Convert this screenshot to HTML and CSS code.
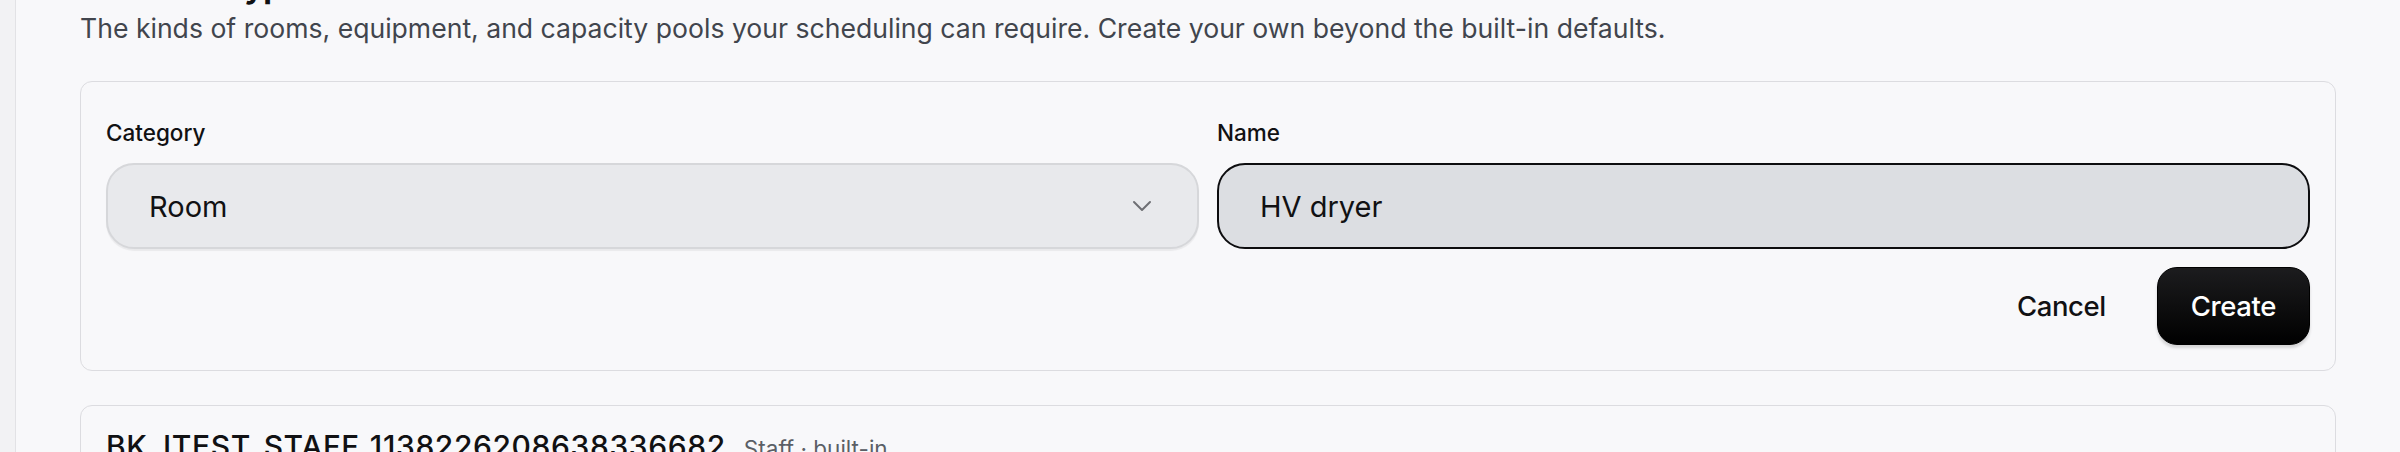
FILE: index.html
```html
<!DOCTYPE html>
<html lang="en">
<head>
    <meta charset="UTF-8">
    <meta name="viewport" content="width=device-width, initial-scale=1.0">
    <title>Resource types</title>
    <link rel="stylesheet" href="styles.css">
</head>
<body>
    <div class="layout">
        <aside class="sidebar"></aside>
        <main class="main">
            <section class="section">
                <h2 class="section-title">Resource types</h2>
                <p class="section-desc">The kinds of rooms, equipment, and capacity pools your scheduling can require. Create your own beyond the built-in defaults.</p>

                <form class="type-form">
                    <div class="form-grid">
                        <label class="field">
                            <span class="field-label">Category</span>
                            <div class="select-wrap">
                                <select class="control control-select">
                                    <option>Room</option>
                                    <option>Equipment</option>
                                    <option>Staff</option>
                                </select>
                                <svg class="chevron" width="20" height="12" viewBox="0 0 20 12">
                                    <polyline points="2,2 10,10 18,2" fill="none" stroke="#6e6f74" stroke-width="2" stroke-linecap="round" stroke-linejoin="round"/>
                                </svg>
                            </div>
                        </label>
                        <label class="field">
                            <span class="field-label">Name</span>
                            <input class="control control-input" type="text" value="HV dryer">
                        </label>
                    </div>
                    <div class="form-actions">
                        <button type="button" class="btn btn-ghost">Cancel</button>
                        <button type="submit" class="btn btn-primary">Create</button>
                    </div>
                </form>

                <ul class="type-list">
                    <li class="type-card">
                        <span class="type-name">BK_ITEST_STAFF_1138226208638336682</span>
                        <span class="type-meta">Staff · built-in</span>
                    </li>
                </ul>
            </section>
        </main>
    </div>
</body>
</html>
```

FILE: styles.css
```css
:root {
    --page-bg: #f8f8fa;
    --sidebar-bg: #f2f2f4;
    --line: #dcdce0;
    --text: #111113;
    --muted: #41454d;
    --field-bg: #e8e9ec;
    --field-active: #dcdee2;
}

* {
    box-sizing: border-box;
}

body {
    margin: 0;
    font-family: 'Inter', 'Liberation Sans', sans-serif;
    background-color: var(--page-bg);
    color: var(--text);
    overflow: hidden;
}

.layout {
    display: flex;
    min-height: 100vh;
}

.sidebar {
    width: 16px;
    flex-shrink: 0;
    background-color: var(--sidebar-bg);
    border-right: 1px solid #e2e2e5;
}

.main {
    flex: 1;
    padding: 0 64px;
}

/* heading sits mostly above the fold; only its descenders show */
.section-title {
    font-size: 32px;
    font-weight: 700;
    line-height: 44px;
    letter-spacing: -0.3px;
    margin: -35px 0 -1px;
}

.section-desc {
    font-size: 26.6px;
    line-height: 40px;
    color: var(--muted);
    margin: 0 0 33px;
}

.type-form {
    border: 1px solid var(--line);
    border-radius: 12px;
    padding: 36px 25px 25px;
}

.form-grid {
    display: grid;
    grid-template-columns: 1fr 1fr;
    gap: 18px;
}

.field {
    display: flex;
    flex-direction: column;
}

.field-label {
    font-size: 22.5px;
    font-weight: 500;
    line-height: 30px;
    margin-bottom: 15px;
}

.select-wrap {
    position: relative;
}

.control {
    width: 100%;
    height: 86px;
    border-radius: 28px;
    font-family: inherit;
    font-size: 29px;
    color: var(--text);
    padding: 0 41px;
    outline: none;
    margin: 0;
}

.control-select {
    appearance: none;
    background-color: var(--field-bg);
    border: 2px solid #d6d7da;
    box-shadow: 0 2px 1px rgba(0, 0, 0, 0.06);
}

.chevron {
    position: absolute;
    right: 47px;
    top: 37px;
    pointer-events: none;
}

.control-input {
    background-color: var(--field-active);
    border: 2px solid #0d0d0f;
}

.form-actions {
    display: flex;
    justify-content: flex-end;
    gap: 18px;
    margin-top: 18px;
}

.btn {
    height: 78px;
    padding: 0 33px;
    border-radius: 20px;
    font-family: inherit;
    font-size: 27.5px;
    font-weight: 500;
    letter-spacing: -0.4px;
    cursor: pointer;
}

.btn-ghost {
    background: none;
    border: none;
    color: var(--text);
}

.btn-primary {
    background: linear-gradient(#1c1c1e, #000);
    border: 1px solid #000;
    color: #fff;
    box-shadow: 0 3px 3px rgba(0, 0, 0, 0.15);
}

.type-list {
    list-style: none;
    margin: 34px 0 0;
    padding: 0;
}

.type-card {
    display: flex;
    align-items: baseline;
    gap: 18px;
    border: 1px solid var(--line);
    border-radius: 12px;
    padding: 20px 25px;
}

.type-name {
    font-size: 30px;
    font-weight: 500;
    line-height: 40px;
    letter-spacing: 0.6px;
}

.type-meta {
    font-size: 22.5px;
    color: #5b5f66;
}
```
